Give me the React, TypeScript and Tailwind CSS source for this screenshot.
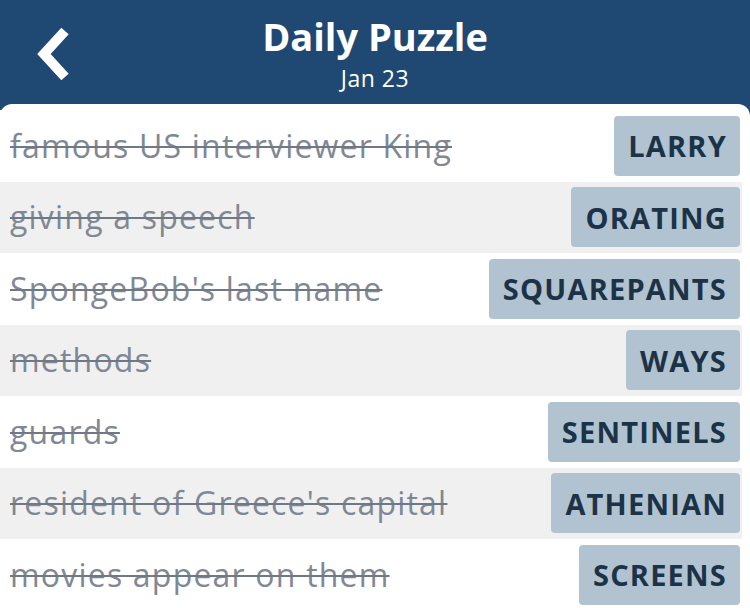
import React from "react";

const rows: [string, string][] = [
  ["famous US interviewer King", "LARRY"],
  ["giving a speech", "ORATING"],
  ["SpongeBob's last name", "SQUAREPANTS"],
  ["methods", "WAYS"],
  ["guards", "SENTINELS"],
  ["resident of Greece's capital", "ATHENIAN"],
  ["movies appear on them", "SCREENS"],
];

export default function App() {
  return (
    <div
      className="w-[750px] h-[608px] overflow-hidden bg-[#1f4872] flex flex-col"
      style={{ fontFamily: "'Open Sans', 'Noto Sans', sans-serif" }}
    >
      <div className="relative h-[104px] shrink-0 flex flex-col items-center">
        <div className="absolute left-[35px] top-[27px]">
          <svg width="36" height="54" viewBox="0 0 36 54">
            <path d="M30 4 L9 27 L30 50" stroke="white" strokeWidth="10" fill="none" strokeLinecap="butt" strokeLinejoin="miter" />
          </svg>
        </div>
        <div className="mt-[11px] text-white font-bold text-[38px] leading-[50px]">Daily Puzzle</div>
        <div className="text-white text-[23px] leading-[30px] mt-[2px] tracking-[0.5px]">Jan 23</div>
      </div>
      <div className="flex-1 bg-white rounded-t-[12px] pt-[6px] pr-[8px]">
        {rows.map(([clue, ans], i) => (
          <div
            key={i}
            className={`h-[71.5px] flex items-center justify-between pl-[10px] pr-[2px] ${i % 2 === 1 ? "bg-[#f0f0f0]" : "bg-white"}`}
          >
            <span className="text-[32px] tracking-[1.2px] text-[#7f8894] line-through decoration-[#6f7884] decoration-[2px]">{clue}</span>
            <span className="h-[60px] flex items-center pl-[14px] pr-[13px] rounded-[4px] bg-[#b1c3d0] text-[#1c3347] font-bold text-[29px] tracking-[1.2px]">
              {ans}
            </span>
          </div>
        ))}
      </div>
    </div>
  );
}
